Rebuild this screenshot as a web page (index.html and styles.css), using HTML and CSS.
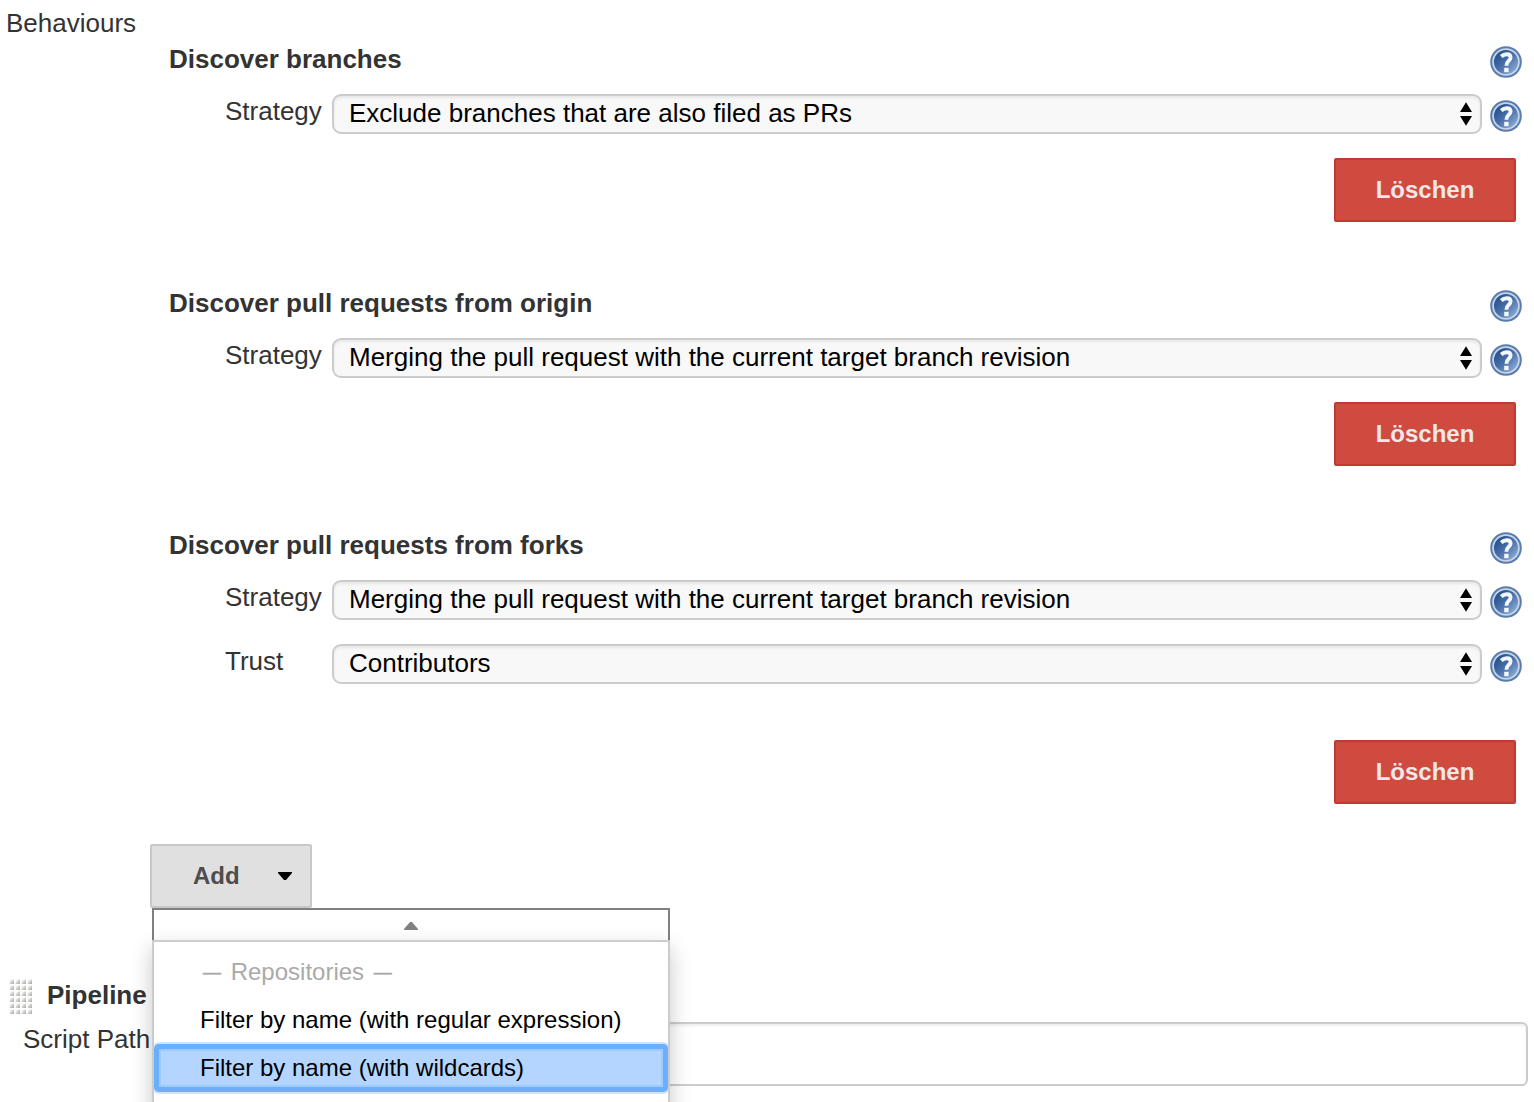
FILE: index.html
```html
<!DOCTYPE html>
<html lang="de">
<head>
<meta charset="utf-8">
<title>Behaviours</title>
<link rel="stylesheet" href="styles.css">
</head>
<body>
<svg class="defs" width="0" height="0" aria-hidden="true">
  <defs>
    <linearGradient id="blue" x1="0" y1="0" x2="1" y2="1">
      <stop offset="0.15" stop-color="#24508f"/>
      <stop offset="0.5" stop-color="#4a70a8"/>
      <stop offset="0.9" stop-color="#8fb0da"/>
    </linearGradient>
    <linearGradient id="dot" x1="0" y1="0" x2="1" y2="1">
      <stop offset="0.2" stop-color="#f6f6f5"/>
      <stop offset="0.5" stop-color="#d2d2d0"/>
      <stop offset="1" stop-color="#a8a8a5"/>
    </linearGradient>
    <pattern id="dots" width="6" height="6" patternUnits="userSpaceOnUse">
      <rect x="1.6" y="1.5" width="4.4" height="4.5" fill="url(#dot)"/>
    </pattern>
    <symbol id="help" viewBox="0 0 32 32">
      <circle cx="16" cy="16" r="15.8" fill="#5b7cae"/>
      <circle cx="16" cy="16" r="12.9" fill="url(#blue)" stroke="#c6d4e8" stroke-width="1.8"/>
      <path d="M11.2 10.4Q13.8 8.2 16.6 8.2Q20.6 8.2 20.6 11.6Q20.6 13.6 18.4 15.2Q16.4 16.8 16.4 19.8" fill="none" stroke="#f4f7fb" stroke-width="3.9"/>
      <rect x="14.2" y="21.8" width="4.4" height="4.4" fill="#f4f7fb"/>
    </symbol>
    <symbol id="updown" viewBox="0 0 12 24">
      <path d="M6 0.3L12 10H0ZM0 14H12L6 23.7Z"/>
    </symbol>
  </defs>
</svg>
<main class="page">
  <div class="section-label">Behaviours</div>

  <section class="group">
    <div class="head"><h2>Discover branches</h2><svg class="help"><use href="#help"/></svg></div>
    <div class="field"><span class="label">Strategy</span><div class="select">Exclude branches that are also filed as PRs<svg class="arrows"><use href="#updown"/></svg></div><svg class="help"><use href="#help"/></svg></div>
    <button class="delete">Löschen</button>
  </section>

  <section class="group origin">
    <div class="head"><h2>Discover pull requests from origin</h2><svg class="help"><use href="#help"/></svg></div>
    <div class="field"><span class="label">Strategy</span><div class="select">Merging the pull request with the current target branch revision<svg class="arrows"><use href="#updown"/></svg></div><svg class="help"><use href="#help"/></svg></div>
    <button class="delete">Löschen</button>
  </section>

  <section class="group forks">
    <div class="head"><h2>Discover pull requests from forks</h2><svg class="help"><use href="#help"/></svg></div>
    <div class="field"><span class="label">Strategy</span><div class="select">Merging the pull request with the current target branch revision<svg class="arrows"><use href="#updown"/></svg></div><svg class="help"><use href="#help"/></svg></div>
    <div class="field"><span class="label">Trust</span><div class="select">Contributors<svg class="arrows"><use href="#updown"/></svg></div><svg class="help"><use href="#help"/></svg></div>
    <button class="delete">Löschen</button>
  </section>

  <div class="add-wrap">
    <button class="add">Add<svg class="caret" viewBox="0 0 14 8"><path d="M0 0H14V1L8 8H6L0 1Z"/></svg></button>
    <div class="menu">
      <div class="scroll-up"><svg viewBox="0 0 14 8"><path d="M0 8H14V7L8 0H6L0 7Z"/></svg></div>
      <div class="menu-body">
        <div class="item title"><span class="dash">—</span> Repositories <span class="dash">—</span></div>
        <div class="item">Filter by name (with regular expression)</div>
        <div class="item selected">Filter by name (with wildcards)</div>
      </div>
    </div>
  </div>

  <div class="pipeline"><svg class="grip"><rect width="24" height="36" fill="url(#dots)"/></svg><h2>Pipeline</h2></div>
  <div class="script"><span>Script Path</span><input class="path" type="text" aria-label="Script Path"></div>
</main>
</body>
</html>
```
FILE: styles.css
```css
* { box-sizing: border-box; }

body {
  margin: 0;
  background: #fff;
  color: #333;
  font: 26px/30px "Liberation Sans", Arial, sans-serif;
}

.defs { display: block; }

.page {
  height: 1102px;
  overflow: hidden;
  display: flex;
  flex-direction: column;
}

h2 { margin: 0; font-size: 26px; line-height: 30px; }

.section-label { flex: none; height: 44px; padding: 8px 0 0 6px; }

.group {
  flex: none;
  display: flex;
  flex-direction: column;
  padding: 0 12px 66px 169px;
}
.group.origin { padding-bottom: 64px; }
.group.forks { padding-bottom: 40px; }

.head {
  display: flex;
  justify-content: space-between;
  height: 50px;
}
.head .help { margin-top: 2px; }

.help { flex: none; width: 32px; height: 32px; }

.field { display: flex; height: 40px; padding-left: 56px; }
.field + .field { margin-top: 24px; }
.field .label { width: 107px; padding-top: 2px; }
.field .help { margin: 6px 0 0 8px; }

.select {
  flex: 1;
  display: flex;
  justify-content: space-between;
  padding: 2px 8px 0 15px;
  border: 2px solid #ccc;
  border-radius: 9px;
  background: #f8f8f8;
  box-shadow: inset 0 2px 3px rgba(0, 0, 0, 0.07);
  color: #000;
}
.arrows { width: 12px; height: 24px; margin-top: 4px; }

.delete {
  align-self: flex-end;
  width: 182px;
  height: 64px;
  margin: 24px 6px 0 0;
  padding: 0;
  border: 2px solid #bf3a30;
  border-radius: 2px;
  background: #d04b3f;
  color: #f0e8e7;
  font: bold 24px/28px "Liberation Sans", Arial, sans-serif;
}
.forks .delete { margin-top: 56px; }

.add-wrap { flex: none; position: relative; height: 136px; padding-left: 150px; }

.add {
  display: flex;
  align-items: center;
  justify-content: space-between;
  width: 162px;
  height: 64px;
  padding: 0 18px 0 41px;
  border: 2px solid #c8c8c8;
  border-radius: 2px;
  background: #e0e0e0;
  color: #4d4d4d;
  font: bold 24px/28px "Liberation Sans", Arial, sans-serif;
}
.caret { width: 14px; height: 8px; fill: #000; }

.menu {
  position: absolute;
  z-index: 2;
  left: 152px;
  top: 64px;
  width: 518px;
  color: #000;
  font-size: 24px;
}

.scroll-up {
  display: flex;
  justify-content: center;
  height: 32px;
  padding-top: 12px;
  border: 2px solid #808080;
  border-bottom: 0;
  background: #fff;
}
.scroll-up svg { width: 14px; height: 8px; fill: #808080; }

.menu-body {
  height: 220px;
  padding-top: 6px;
  border: 2px solid #ccc;
  background: #fff;
  box-shadow: 0 8px 20px rgba(0, 0, 0, 0.22);
}

.item { height: 48px; padding-left: 46px; line-height: 48px; }
.title { padding-left: 49px; color: #aaa; }
.dash { font-size: 18px; line-height: 1; vertical-align: 2px; -webkit-text-stroke: 0.4px #aaa; }
.dash:first-child { margin-right: 3px; }
.dash:last-child { margin-left: 3px; }
.selected {
  border-radius: 5px;
  background: #b3d5ff;
  box-shadow: inset 0 0 0 5px #6bb0ff, inset 0 0 0 7px #9dcaff, 0 0 0 2px #cfe5ff;
  clip-path: inset(-3px 0);
}

.pipeline { flex: none; display: flex; height: 42px; padding-left: 8px; }
.grip { width: 24px; height: 36px; margin: -2px 15px 0 0; }

.script { flex: none; display: flex; height: 64px; padding: 0 6px 0 23px; }
.script span { width: 129px; padding-top: 2px; }
.path {
  flex: 1;
  border: 2px solid #ccc;
  border-radius: 6px;
  box-shadow: inset 0 2px 3px rgba(0, 0, 0, 0.07);
}
```
